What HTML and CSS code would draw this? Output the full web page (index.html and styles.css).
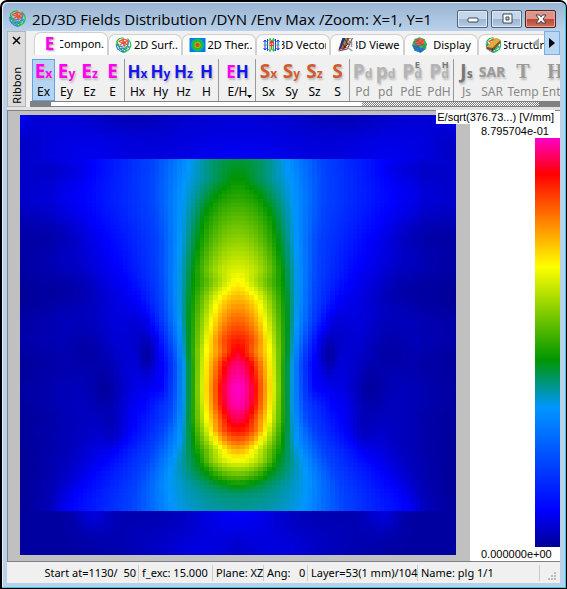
FILE: index.html
```html
<!DOCTYPE html>
<html lang="en">
<head>
<meta charset="utf-8">
<title>2D/3D Fields Distribution</title>
<link rel="stylesheet" href="styles.css">
</head>
<body>
<svg width="0" height="0" class="defs" aria-hidden="true">
  <symbol id="mesh" viewBox="0 0 16 16">
    <g fill="none" stroke-width="1.1">
      <path d="M1 6.500C0 10 3 14 8 15.500M1.500 4.500C2 10 5 12 9 15.500M3 10L10 8.500M2 12.500L9 11M5 14.500L12 11" stroke="#3a66f0"/>
      <path d="M1 4.500L4 1.500L8 .8M1 4.500L3 7.500L4.500 12L9 15M.8 8L5 9.500M14.800 5L15.300 9L13.500 12.500L9 15.300M11 9L10 15M14 9L7 12M12 1.500L14.800 5" stroke="#17c53a"/>
      <path d="M3 4.500L8 2L12.500 3.500L12 8L7.500 6L4 8.500M8 2L7.500 6L9.500 9.500M12.500 3.500L7.500 6L3 4.500M5.500 3L11 6.500" stroke="#e85030"/>
      <path d="M13.500 4L12 9L14.500 11.500M6 10.500L10 12.500" stroke="#2f8fd6"/>
    </g>
  </symbol>
  <symbol id="globe" viewBox="0 0 16 16">
    <path d="M3 2L8 .3L13 2L15.500 7L14.500 12L9 15.700L3 13.500L.5 8Z" fill="#37bd45"/>
    <path d="M.8 8L3 13.500L9 15.700L14 12L10 11L5 9Z" fill="#237ad2"/>
    <path d="M3 4L8 1L12.500 3L12.500 7.500L8 9L4 7.500Z" fill="#ff5a38"/>
    <path d="M2 5L6 9L9 15M1 9L6 9L13 7M3 12L8 9M4 2L9 6L14 11M13 2L9 6L4 7M8 1L6 4L2 5M10 15L12 10L15 7" fill="none" stroke="#285090" stroke-width=".5"/>
  </symbol>
  <symbol id="thermal" viewBox="0 0 16 16">
    <path d="M0 1H16V15H0Z" fill="#087ae8"/>
    <circle cx="8" cy="8" r="6.500" fill="#00b894"/><circle cx="8" cy="8" r="5" fill="#24bf18"/>
    <circle cx="8" cy="8" r="3.200" fill="#8fbd17"/><circle cx="8" cy="8" r="2" fill="#ed3c19"/>
  </symbol>
  <symbol id="vectors" viewBox="0 0 16 16">
    <path d="M1.500 3V13M4 2V14M12 2V14M14.500 3V13M0 5L1.500 3L3 5M0 11L1.500 13L3 11M13 5L14.500 3L16 5M13 11L14.500 13L16 11" stroke="#1934f5" fill="none"/>
    <path d="M6.500 1.500V14.500M10 1.500V14.500M5 4L6.500 1.500L8 4M8.500 4L10 1.500L11.500 4M5 12L6.500 14.500L8 12M8.500 12L10 14.500L11.500 12M0 8H5M11 8H16" stroke="#24bd55" fill="none"/>
    <path d="M8.200 4V12M6 6.500L8.200 4L10.500 6.500M6 8.500H10.500" stroke="#f53327" fill="none" stroke-width="1.200"/>
  </symbol>
  <symbol id="viewer" viewBox="0 0 16 16">
    <path d="M5 1H15L10 11L1 13Z" fill="#cb3931"/><path d="M5 1H8L3 12L1 13Z" fill="#25348e"/>
    <path d="M8 1H10L7 8L4 11Z" fill="#47b85a"/><path d="M11 2L15 1L11 9L8 12Z" fill="#eee"/>
    <path d="M10 1L12 5L5 13M7 2L11 8M4 5L8 11M15 1L10 12L1 14" stroke="#381d1d" fill="none" stroke-width=".8"/>
    <path d="M9 10L15 14M14 4V10" stroke="#999" stroke-width="1.500"/>
  </symbol>
  <symbol id="structure" viewBox="0 0 16 16">
    <use href="#mesh"/>
    <path d="M1 10L10 1L15 3L7 13L1 12Z" fill="#c78b25"/><path d="M1 10L10 1L15 3L7 11Z" fill="#e0ad44"/>
    <path d="M1 10L7 11L15 3V6L7 14L1 12Z" fill="#82571c"/><path d="M7 11V14" stroke="#4d3515"/>
  </symbol>
</svg>
<div class="window">
  <header class="titlebar">
    <svg class="app-icon" aria-hidden="true"><use href="#mesh"/></svg>
    <h1>2D/3D Fields Distribution /DYN /Env Max /Zoom: X=1, Y=1</h1>
    <div class="controls">
      <button aria-label="Minimize"><svg viewBox="0 0 12 12"><rect x="1" y="5" width="10" height="4" rx="1"/></svg></button>
      <button aria-label="Maximize"><svg viewBox="0 0 12 12"><path fill-rule="evenodd" d="M2 1H11V10H2ZM5 4V7H8V4Z"/></svg></button>
      <button class="close" aria-label="Close"><svg viewBox="0 0 12 12"><path d="M1 2H4.500L6 4L7.500 2H11L8 6L11 10H7.500L6 8L4.500 10H1L4 6Z"/></svg></button>
    </div>
  </header>
  <section class="ribbon">
    <div class="handle"><button aria-label="Close ribbon"><svg viewBox="0 0 9 9"><path d="M1 1L8 8M8 1L1 8"/></svg></button><span>Ribbon</span></div>
    <div class="ribbon-main">
      <nav class="tabs">
        <button class="tab active"><b class="field-e">E</b><span>Compon..</span></button>
        <button class="tab"><svg><use href="#mesh"/></svg><span>2D Surf..</span></button>
        <button class="tab"><svg><use href="#thermal"/></svg><span>2D Ther..</span></button>
        <button class="tab"><svg><use href="#vectors"/></svg><span>3D Vector</span></button>
        <button class="tab"><svg><use href="#viewer"/></svg><span>3D Viewer</span></button>
        <button class="tab"><svg><use href="#globe"/></svg><span>Display</span></button>
        <button class="tab"><svg><use href="#structure"/></svg><span>Structure</span></button>
        <button class="tab" aria-label="More"><svg><use href="#mesh"/></svg></button>
        <div class="tab-scroll">
          <button aria-label="Scroll left" disabled><svg viewBox="0 0 6 10"><path d="M6 0V10L0 5Z"/></svg></button>
          <button aria-label="Scroll right"><svg viewBox="0 0 6 10"><path d="M0 0V10L6 5Z"/></svg></button>
        </div>
      </nav>
      <div class="tools">
        <div class="group e">
          <button class="selected"><b>E<small>x</small></b><span>Ex</span></button>
          <button><b>E<small>y</small></b><span>Ey</span></button>
          <button><b>E<small>z</small></b><span>Ez</span></button>
          <button><b>E</b><span>E</span></button>
        </div>
        <div class="group h">
          <button><b>H<small>x</small></b><span>Hx</span></button>
          <button><b>H<small>y</small></b><span>Hy</span></button>
          <button><b>H<small>z</small></b><span>Hz</span></button>
          <button><b>H</b><span>H</span></button>
        </div>
        <div class="group eh">
          <button><b><i>E</i>H</b><span>E/H</span><svg class="drop" viewBox="0 0 5 3"><path d="M0 0H5L2.500 3Z"/></svg></button>
        </div>
        <div class="group s">
          <button><b>S<small>x</small></b><span>Sx</span></button>
          <button><b>S<small>y</small></b><span>Sy</span></button>
          <button><b>S<small>z</small></b><span>Sz</span></button>
          <button><b>S</b><span>S</span></button>
        </div>
        <div class="group off">
          <button disabled><b>P<small>d</small></b><span>Pd</span></button>
          <button disabled><b>p<small>d</small></b><span>pd</span></button>
          <button class="wide" disabled><b>P<small>d</small><sup>E</sup></b><span>PdE</span></button>
          <button class="wide" disabled><b>P<small>d</small><sup>H</sup></b><span>PdH</span></button>
        </div>
        <div class="group off dark">
          <button disabled><b>J<small>s</small></b><span>Js</span></button>
          <button class="wide" disabled><b class="sar">SAR</b><span>SAR</span></button>
          <button class="temp" disabled><b class="serif">T</b><span>Temp</span></button>
          <button class="temp last" disabled><b class="serif">H</b><span>Enth</span></button>
        </div>
      </div>
      <div class="scrollbar"><i class="cap"></i><i class="thumb"></i><i class="track"></i><i class="cap"></i></div>
    </div>
  </section>
  <main>
    <div class="plot"><canvas id="field" width="97" height="100" role="img" aria-label="Field map"></canvas></div>
    <aside class="legend">
      <div class="unit">E/sqrt(376.73...) [V/mm]</div>
      <div class="value">8.795704e-01</div>
      <div class="colorbar"></div>
      <div class="value low">0.000000e+00</div>
    </aside>
  </main>
  <footer>
    <span class="start">Start at=1130/&nbsp; 50</span><span class="freq">f_exc: 15.000</span><span class="plane">Plane: XZ</span><span class="angle">Ang:&nbsp;&nbsp; 0</span><span class="layer">Layer=53(1 mm)/104</span><span class="name">Name: plg 1/1</span>
    <svg class="grip" viewBox="0 0 9 9"><path d="M6 0H8V2H6ZM3 3H5V5H3ZM6 3H8V5H6ZM0 6H2V8H0ZM3 6H5V8H3ZM6 6H8V8H6Z"/></svg>
  </footer>
</div>
<script src="field.js"></script>
</body>
</html>
```

FILE: styles.css
```css
* { box-sizing: border-box; }
body { margin: 0; background: #fff; font: 12px/16px "Noto Sans", sans-serif; color: #000; }
button { font: inherit; color: inherit; background: none; border: 0; padding: 0; margin: 0; }
.defs { position: absolute; }

.window {
  height: 100vh; display: flex; flex-direction: column;
  border: 2px solid #000; border-right-width: 1px; border-bottom-width: 1px;
  border-radius: 7px 7px 0 0;
  background: linear-gradient(#99b4d1, #b9d1ea 29px);
  box-shadow: inset -1px -1px #35c8e8, inset 1px 1px #e4eefa;
  padding: 0 6px 5px 5px;
}

.titlebar { flex: none; height: 29px; display: flex; align-items: center; padding: 4px 4px 0 2px; }
.app-icon { width: 17px; height: 17px; margin-right: 6px; }
h1 { flex: 1; margin: 0; font: 15px/24px "Open Sans", sans-serif; white-space: nowrap; }
.controls { display: flex; gap: 3px; }
.controls button {
  width: 31px; height: 18px; display: flex; align-items: center; justify-content: center;
  border: 1px solid #50647c; border-radius: 2px; box-shadow: inset 0 0 0 1px #dfe9f5;
  background: linear-gradient(#c5d6ea 48%, #9db6d2 52%, #b5cce6);
}
.controls .close { border-color: #5b1f1f; box-shadow: inset 0 0 0 1px #e2a79d; background: linear-gradient(#dc9487 48%, #b94733 52%, #cf7157); }
.controls svg { width: 12px; height: 12px; fill: #fff; stroke: #3c4654; stroke-width: 1; }

.ribbon { flex: none; height: 76px; display: flex; gap: 4px; background: #f0f0f0; }
.handle {
  flex: none; width: 19px; border: 1px solid #b4b4b4; background: #dcdcdc;
  display: flex; flex-direction: column; align-items: center; justify-content: space-between; padding: 4px 0 2px;
}
.handle button { line-height: 0; }
.handle button svg { width: 9px; height: 9px; stroke: #000; stroke-width: 1.500; fill: none; }
.handle span { writing-mode: vertical-rl; transform: rotate(180deg); font-size: 11px; }
.ribbon-main { flex: 1; min-width: 0; display: flex; flex-direction: column; }
.tabs { position: relative; display: flex; height: 24px; padding: 1px 0 0 4px; overflow: hidden; align-items: flex-end; }
.tab {
  flex: none; width: 74px; height: 21px; display: flex; align-items: center; gap: 2px; padding: 0 3px 0 6px;
  background: #fbfbfb; border: 1px solid #d0d0d0; border-bottom: 0; border-radius: 7px 7px 0 0; font-size: 11px;
}
.tab.active { height: 23px; background: #fff; }
.tab svg { flex: none; width: 17px; height: 16px; }
.tab span { flex: 1; min-width: 0; overflow: hidden; white-space: nowrap; display: flex; justify-content: center; }
.field-e { flex: none; width: 17px; text-align: center; color: #f0e; font: bold 17px/18px "Open Sans", sans-serif; text-shadow: 1px 1px 2px #999; }
.tab-scroll { position: absolute; right: 0; top: 0; display: flex; height: 24px; gap: 5px; }
.tab-scroll button { width: 16px; display: flex; align-items: center; justify-content: center; }
.tab-scroll button:first-child { width: 6px; }
.tab-scroll button + button { border: 1px solid #78aee0; background: #b9d7f2; }
.tab-scroll svg { width: 6px; height: 10px; }
.tab-scroll button:disabled svg { fill: #aaa; }

.tools { flex: 1; display: flex; gap: 1px; padding: 4px 0 0 2px; overflow: hidden; }
.group { flex: none; display: flex; border-right: 1px solid #999; }
.group:last-child { border: 0; }
.group button { position: relative; width: 23px; height: 42px; display: flex; flex-direction: column; align-items: center; }
.group b { height: 24px; display: flex; align-items: baseline; font: bold 19px/25px "Open Sans", sans-serif; text-shadow: 1px 2px 2px #bbb; }
.group small { font-size: 12px; }
.group sup { align-self: flex-start; margin-left: -7px; font-size: 9px; line-height: 12px; color: #777; }
.group span { line-height: 18px; }
.group .selected { background: #b3d5f3; box-shadow: inset 0 0 0 1px #62a2e4; }
.e b, .eh i { color: #f0e; font-style: normal; }
.h b, .eh b { color: #1515ee; }
.h b, .eh b { font-size: 17px; }
.group.eh button { width: 35px; }
.drop { position: absolute; right: 3px; bottom: 3px; width: 5px; height: 3px; }
.s b { color: #d35a30; }
.off b { color: #b4b4b4; }
.off.dark b { color: #999; }
.off.dark button:first-child b { color: #777; }
.off span { color: #888; }
.group .wide { width: 28px; }
.group .temp { width: 34px; }
.group .last { width: 30px; }
.group .sar { font-size: 14px; }
.group .serif { font-family: "Liberation Serif", serif; font-size: 20px; }
.scrollbar { height: 6px; display: flex; border: 1px solid #808080; border-width: 1px 0; background: #fff; }
.scrollbar .cap { width: 21px; background: #808080; }
.scrollbar .thumb { flex: 7; }
.scrollbar .track { flex: 4; background: repeating-conic-gradient(#808080 0 25%, #fff 0 50%) 0 0 / 2px 2px; }

main { flex: 1; min-height: 0; display: flex; margin-top: 3px; border: 1px solid #808088; border-right: 0; background: #c0c0c0; box-shadow: 0 -3px #e2e2e2; }
.plot { flex: 1; min-width: 0; padding: 4px 14px 6px 12px; }
canvas { display: block; width: 100%; height: 100%; image-rendering: pixelated; }
.legend { position: relative; width: 90px; background: #fff; display: flex; flex-direction: column; font: 11px/14px "Liberation Sans", sans-serif; padding-top: 13px; }
.unit { position: absolute; right: 5px; top: -1px; padding: 0 1px; white-space: nowrap; background: #fff; }
.value { padding-left: 11px; }
.colorbar {
  flex: 1; width: 25px; align-self: flex-end;
  background: linear-gradient(to top, #000096, #00f 8.8%, #0096ff 34.1%, #009600 45.8%, #ff0 68.5%, #f00 91.2%, #ff00c8);
}

footer { flex: none; height: 21px; display: flex; align-items: center; background: #f0f0f0; font-size: 11px; line-height: 16px; white-space: pre; padding: 0 2px 0 0; }
footer span { border-right: 1px solid #ccc; padding-left: 3px; }
.start { width: 132px; text-align: right; padding-right: 2px; }
.freq { width: 74px; }
.plane { width: 51px; }
.angle { width: 44px; }
.layer { width: 110px; }
.name { flex: 1; }
.grip { width: 9px; height: 9px; align-self: flex-end; margin: 0 1px 2px 8px; fill: #bbb; }
```

FILE: field.js
```js
// Distance from the axis at which each level is reached, per height.
const levels = [1, 0.912, 0.685, 0.458, 0.341, 0.2, 0.088];
// y, axis value, distances for levels[1..6], value at the outer edge
const rows = [
  [159, 0.430, 0, 0, 0, 48, 85, 148, 0.055],
  [180, 0.460, 0, 0, 6, 53, 87, 152, 0.050],
  [200, 0.500, 0, 0, 25, 56, 87, 155, 0.052],
  [218, 0.540, 0, 0, 34, 57, 84, 145, 0.035],
  [240, 0.585, 0, 0, 39, 58, 80, 131, 0.015],
  [270, 0.655, 0, 0, 44, 60, 79, 118, 0.012],
  [282, 0.690, 0, 4, 45, 60, 78, 111, 0.005],
  [300, 0.755, 0, 20, 47, 60, 77, 101, 0.000],
  [320, 0.820, 0, 26, 48, 59, 74, 91, 0.015],
  [340, 0.885, 0, 30, 48, 57, 69, 81, 0.020],
  [352, 0.925, 4, 32, 48, 56, 66, 78, 0.010],
  [365, 0.965, 13, 33, 47, 55, 64, 75, 0.006],
  [388, 1.000, 17, 34, 47, 55, 65, 77, 0.012],
  [405, 0.990, 16, 33, 47, 55, 67, 95, 0.010],
  [420, 0.945, 10, 31, 47, 56, 70, 104, 0.003],
  [430, 0.900, 0, 28, 46, 57, 75, 107, 0.006],
  [440, 0.830, 0, 23, 45, 58, 80, 114, 0.003],
  [450, 0.755, 0, 15, 43, 61, 85, 125, 0.000],
  [460, 0.680, 0, 0, 39, 65, 90, 133, 0.002],
  [472, 0.575, 0, 0, 31, 68, 96, 143, 0.000],
  [485, 0.460, 0, 0, 4, 70, 101, 153, 0.000],
  [495, 0.405, 0, 0, 0, 68, 104, 162, 0.000],
  [511, 0.385, 0, 0, 0, 65, 106, 170, 0.002]
];
// Local dips: distance, y, radius x, radius y, factor
const dips = [
  [91, 355, 8, 20, 0.85], [133, 389, 16, 26, 0.8], [152, 348, 20, 26, 0.6],
  [175, 290, 28, 16, 0.5], [126, 425, 12, 22, 0.5], [190, 235, 28, 16, 0.4],
  [176, 171, 30, 10, 0.25], [102, 335, 14, 26, 0.35]
];
const stops = [
  [0, 0, 0, 150], [0.088, 0, 0, 255], [0.341, 0, 150, 255], [0.458, 0, 150, 0],
  [0.685, 255, 255, 0], [0.912, 255, 0, 0], [1, 255, 0, 200]
];
const bump = (x, y, cx, cy, rx, ry) => Math.exp(-(((x - cx) / rx) ** 2) - ((y - cy) / ry) ** 2);

// Value along one tabulated row, at distance d from the axis.
function profile(r, d) {
  const pts = [[0, r[1]]];
  for (let i = 1; i < levels.length; i++) {
    if (levels[i] < r[1] && r[i + 1] > 0) pts.push([r[i + 1], levels[i]]);
  }
  const rest = 218 - r[7];
  pts.push([r[7] + rest * 0.4, 0.4 * 0.088 + 0.6 * r[8]], [218, r[8]]);
  for (let i = 1; i < pts.length; i++) {
    if (d <= pts[i][0]) {
      let q = (d - pts[i - 1][0]) / (pts[i][0] - pts[i - 1][0]);
      if (i === 1) q *= q;
      return pts[i - 1][1] + (pts[i][1] - pts[i - 1][1]) * q;
    }
  }
  return r[8];
}

function inner(d, y) {
  let k = 0;
  while (k < rows.length - 2 && rows[k + 1][0] < y) k++;
  const f = (y - rows[k][0]) / (rows[k + 1][0] - rows[k][0]);
  let value = profile(rows[k], d) * (1 - f) + profile(rows[k + 1], d) * f;
  for (const [cx, cy, rx, ry, a] of dips) value *= 1 - a * bump(d, y, cx, cy, rx, ry);
  return value;
}

function sample(d, y) {
  if (y < 159) {
    return 0.053 + 0.026 * bump(d, y, 0, 160, 65, 26) + 0.018 * bump(d, y, 150, 157, 45, 30)
      + 0.025 * bump(d, y, 218, 115, 9, 16) - 0.025 * bump(d, y, 106, 118, 45, 16)
      - 0.015 * bump(d, y, 215, 148, 20, 18);
  }
  if (y > 511) {
    return 0.008 + 0.078 * bump(d, y, 0, 506, 48, 34) + 0.045 * bump(d, y, 40, 555, 45, 28)
      + 0.045 * bump(d, y, 145, 512, 18, 20) + 0.016 * bump(d, y, 100, 535, 45, 35);
  }
  const v = inner(d, y);
  return d > 183 ? v * 0.85 : v;
}

function paint(t) {
  let i = 1;
  while (i < stops.length - 1 && stops[i][0] < t) i++;
  const a = stops[i - 1], b = stops[i];
  const q = Math.max(0, Math.min(1, (t - a[0]) / (b[0] - a[0])));
  return [1, 2, 3].map(c => a[c] + (b[c] - a[c]) * q);
}

const canvas = document.getElementById("field");
const ctx = canvas.getContext("2d");
const image = ctx.createImageData(97, 100);
for (let row = 0; row < 100; row++) {
  for (let col = 0; col < 97; col++) {
    const rgb = paint(sample(Math.abs(col - 48) * 4.5, 115 + (row + 0.5) * 4.4));
    image.data.set([...rgb, 255], (row * 97 + col) * 4);
  }
}
ctx.putImageData(image, 0, 0);
```
